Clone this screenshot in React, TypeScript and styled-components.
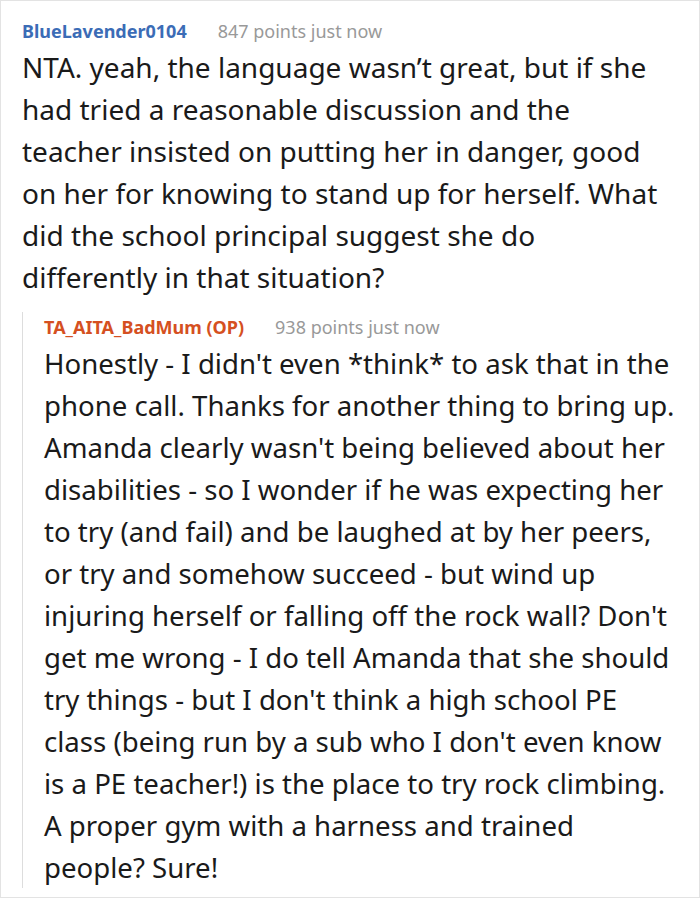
import React from "react";
import styled, { createGlobalStyle } from "styled-components";

const Global = createGlobalStyle`
  html, body { margin: 0; padding: 0; background: #fff; }
  body { font-family: "Noto Sans", "Open Sans", sans-serif; }
`;

const Card = styled.div`
  box-sizing: border-box;
  width: 700px;
  height: 898px;
  border: 1px solid #e3e3e3;
  padding: 15px 29px 0 21px;
  overflow: hidden;
`;

const Header = styled.div`
  display: flex;
  align-items: baseline;
  gap: 31px;
  font-size: 18px;
  line-height: 30px;
`;

const Author = styled.span<{ $color: string }>`
  font-weight: 700;
  color: ${(p) => p.$color};
`;

const Meta = styled.span`
  color: #999;
`;

const Body = styled.p<{ $size: number }>`
  margin: 0;
  font-size: ${(p) => p.$size}px;
  line-height: 42px;
  color: #1a1a1a;
`;

const Reply = styled.div`
  margin-top: 14px;
  margin-right: -10px;
  border-left: 1px solid #ddd;
  padding-left: 21px;
`;

const Comment = ({
  author,
  color,
  meta,
  text,
  size,
}: {
  author: string;
  color: string;
  meta: string;
  text: string;
  size: number;
}) => (
  <>
    <Header>
      <Author $color={color}>{author}</Author>
      <Meta>{meta}</Meta>
    </Header>
    <Body $size={size}>{text}</Body>
  </>
);

export default function App() {
  return (
    <>
      <Global />
      <Card>
        <Comment
          author="BlueLavender0104"
          color="#3b6cb6"
          meta="847 points just now"
          size={28}
          text="NTA. yeah, the language wasn’t great, but if she had tried a reasonable discussion and the teacher insisted on putting her in danger, good on her for knowing to stand up for herself. What did the school principal suggest she do differently in that situation?"
        />
        <Reply>
          <Comment
            author="TA_AITA_BadMum (OP)"
            color="#d55021"
            meta="938 points just now"
            size={27.6}
            text="Honestly - I didn't even *think* to ask that in the phone call. Thanks for another thing to bring up. Amanda clearly wasn't being believed about her disabilities - so I wonder if he was expecting her to try (and fail) and be laughed at by her peers, or try and somehow succeed - but wind up injuring herself or falling off the rock wall? Don't get me wrong - I do tell Amanda that she should try things - but I don't think a high school PE class (being run by a sub who I don't even know is a PE teacher!) is the place to try rock climbing. A proper gym with a harness and trained people? Sure!"
          />
        </Reply>
      </Card>
    </>
  );
}
